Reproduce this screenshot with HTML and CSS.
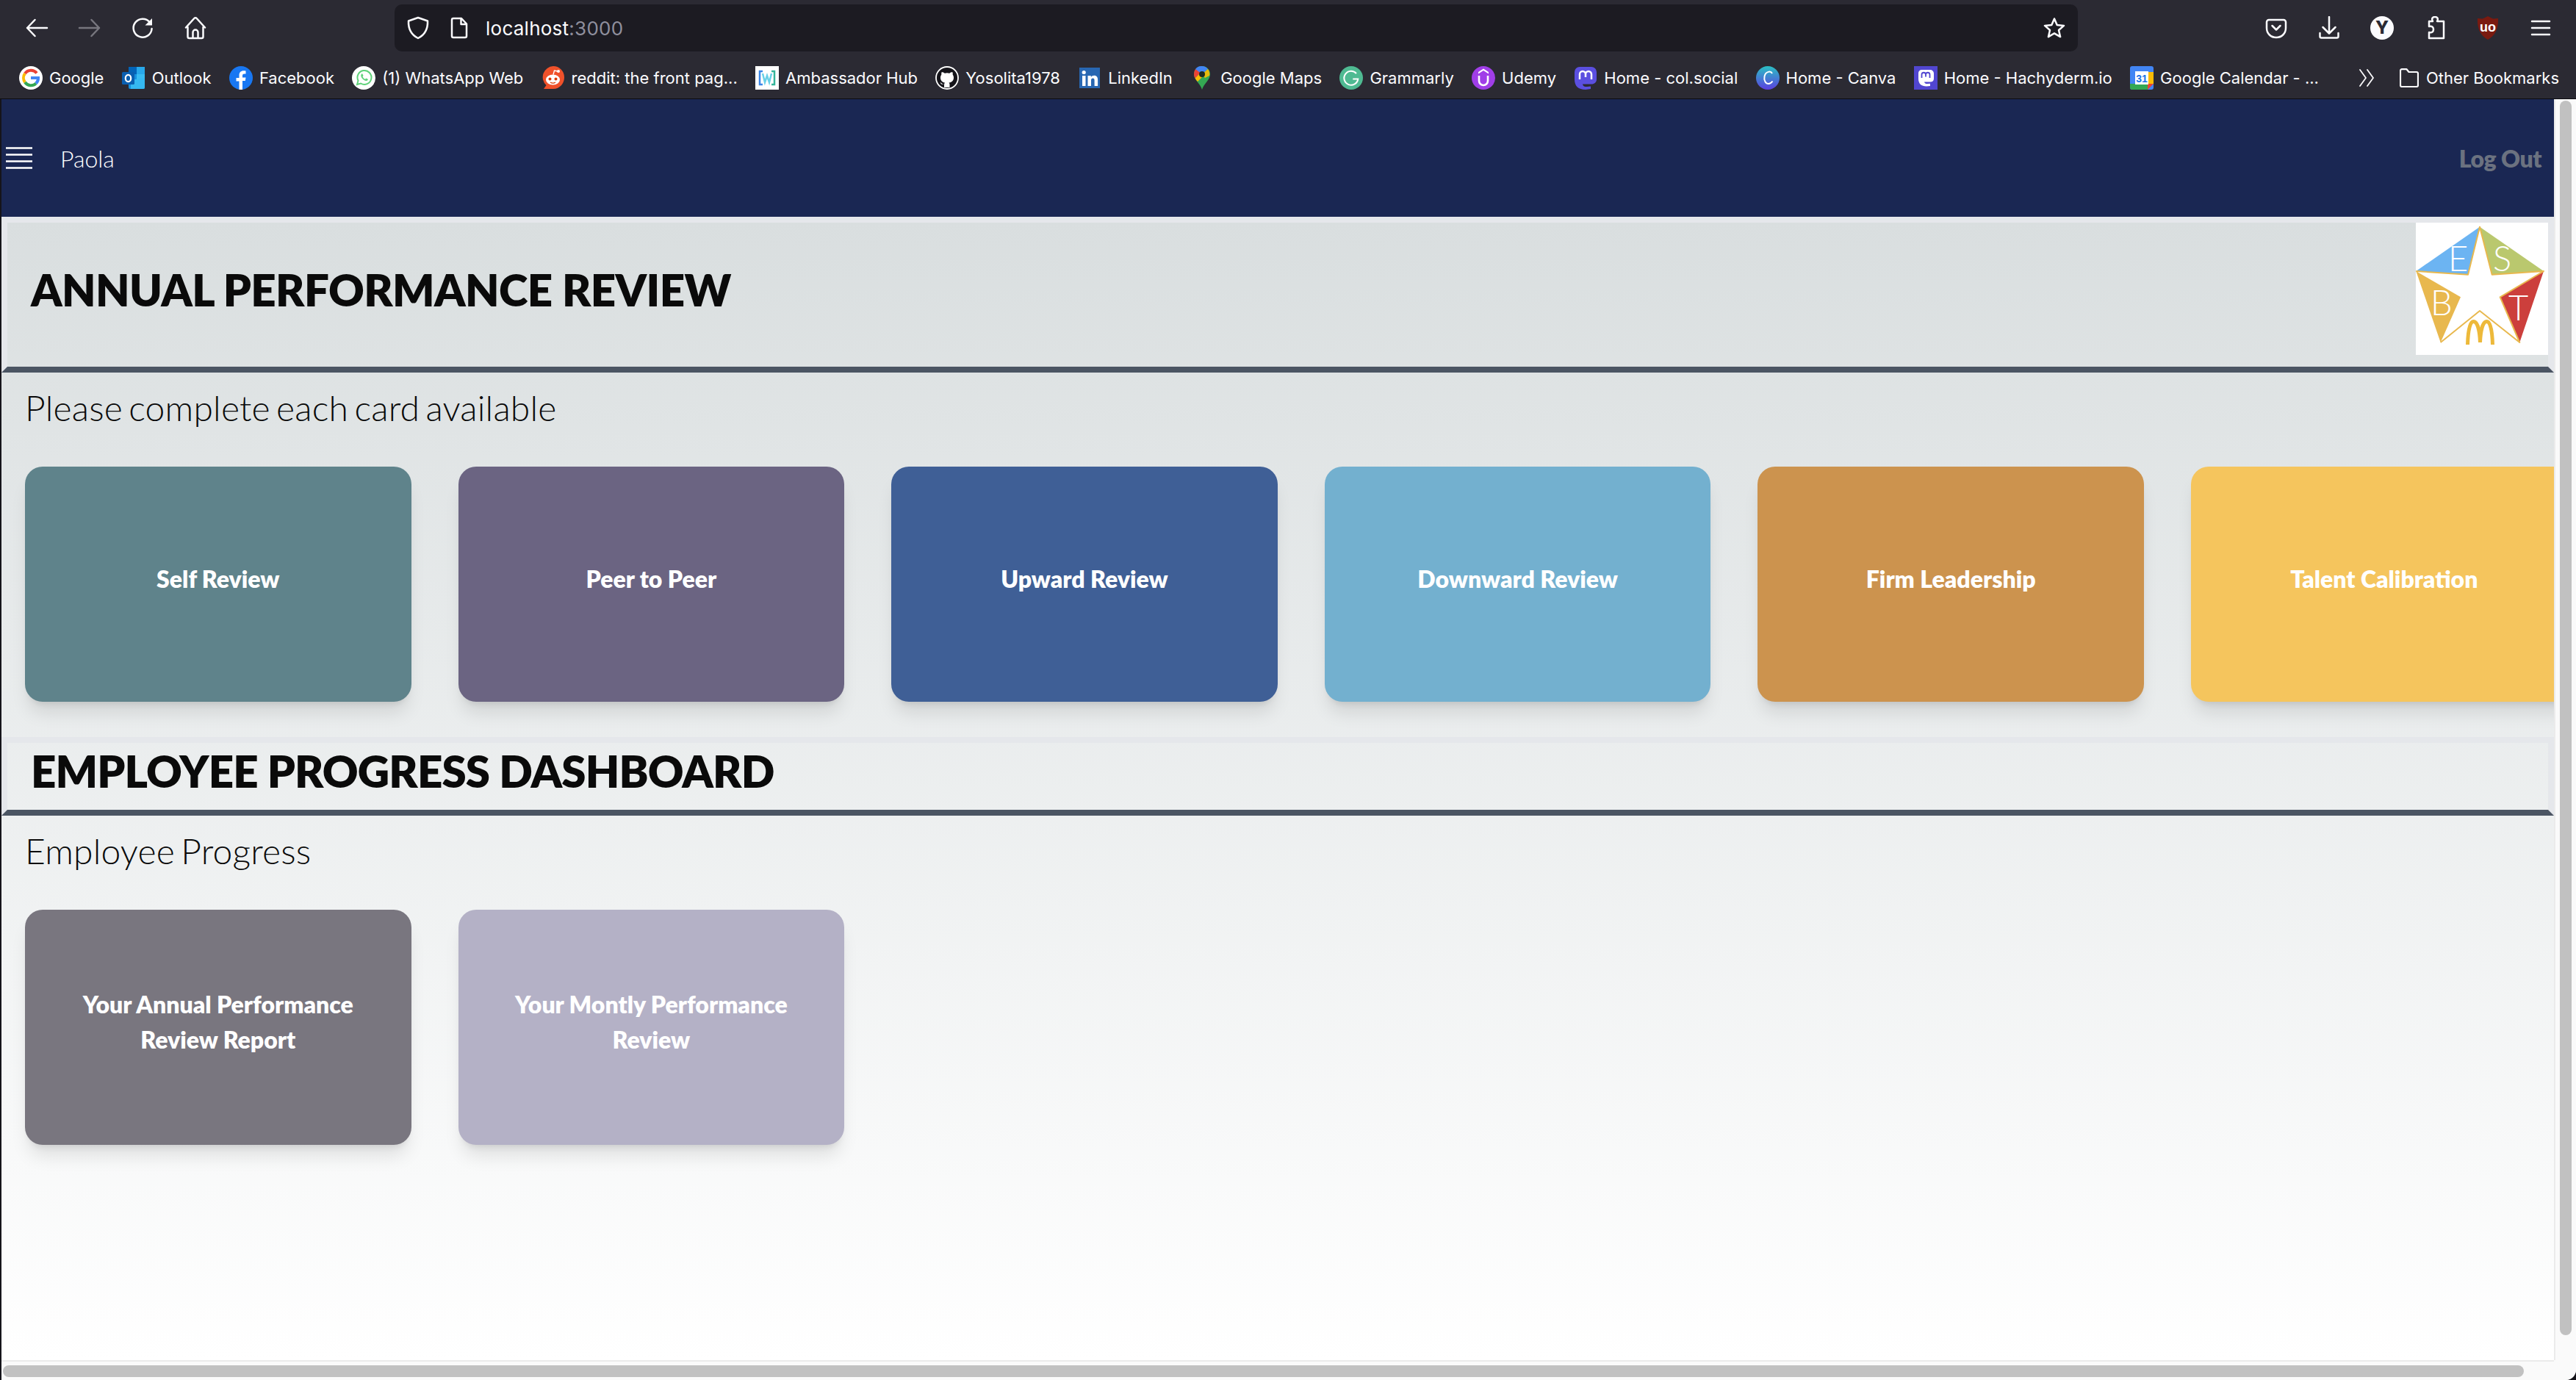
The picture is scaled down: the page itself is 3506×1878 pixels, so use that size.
FILE: index.html
```html
<!DOCTYPE html>
<html lang="en">
<head>
<meta charset="utf-8">
<title>Annual Performance Review</title>
<link rel="stylesheet" href="styles.css">
</head>
<body>
<div class="chrome">
  <div class="toolbar">
    <svg class="tool" viewBox="0 0 32 32"><path d="M30 16H3M13.5 5 3 16l10.5 11"/></svg>
    <svg class="tool dim" viewBox="0 0 32 32"><path d="M2 16h27M18.5 5 29 16 18.5 27"/></svg>
    <svg class="tool" viewBox="0 0 32 32"><path d="M26 8.500A12.500 12.500 0 1 0 28.600 17"/><path class="solid" d="M29 3v9.500h-9.500z"/></svg>
    <svg class="tool" viewBox="0 0 32 32"><path d="M5.500 15v13a2 2 0 0 0 2 2h17a2 2 0 0 0 2-2V15M3 15.500 14.300 3a2.300 2.300 0 0 1 3.400 0L29 15.500M12.500 30v-8a3.500 3.500 0 0 1 7 0v8"/></svg>
    <div class="urlbar">
      <svg class="tool" viewBox="0 0 32 32"><path d="M16 2 29 6.500C29.500 18 25 25.500 16 30 7 25.500 2.500 18 3 6.500Z"/></svg>
      <svg class="tool page" viewBox="0 0 32 32"><path d="M8 3h11l7 7.500V27a2 2 0 0 1-2 2H8a2 2 0 0 1-2-2V5a2 2 0 0 1 2-2ZM18.500 3v8H26"/></svg>
      <span class="url">localhost<span class="port">:3000</span></span>
      <svg class="tool star" viewBox="0 0 32 32"><path d="M16 3.500l3.700 8.500 9.300.9-7 6.100 2.100 9.100-8.100-4.800-8.100 4.800 2.100-9.100-7-6.100 9.300-.9Z"/></svg>
    </div>
    <div class="tools-right">
      <svg class="tool" viewBox="0 0 32 32"><path d="M6 5h20a3 3 0 0 1 3 3v8c0 8-6 13-13 13S3 24 3 16V8a3 3 0 0 1 3-3ZM10.500 13l5.500 5.500 5.500-5.500"/></svg>
      <svg class="tool" viewBox="0 0 32 32"><path d="M16 1v22M7.500 15l8.500 8.500 8.500-8.500M3.500 23v4.500a2 2 0 0 0 2 2h21a2 2 0 0 0 2-2V23"/></svg>
      <svg class="tool" viewBox="0 0 32 32"><circle class="solid" cx="16" cy="16" r="16"/><text class="y-letter" x="16" y="24">Y</text></svg>
      <svg class="tool" viewBox="0 0 32 32"><path d="M8 7h5c-2-4 0-6 3-6s5 2 3 6h9v23H8v-8c4 1 6-1 6-4s-2-5-6-4Z"/></svg>
      <svg class="tool" viewBox="0 0 32 32"><path class="ublock" d="M16 0 23 3.500 30 3C30.500 16 27 26 16 32 5 26 1.500 16 2 3L9 3.500Z"/><text class="ub-letter" x="16" y="21">uo</text></svg>
      <svg class="tool" viewBox="0 0 32 32"><path d="M4 7h24M4 16h24M4 25h24"/></svg>
    </div>
  </div>
  <div class="bookmarks">
    <a class="bm"><svg viewBox="0 0 32 32"><circle cx="16" cy="16" r="16" fill="#fff"/><path d="M24 9.500A10 10 0 0 0 8 10" fill="none" stroke="#ea4335" stroke-width="4"/><path d="M8 10a10 10 0 0 0 0 12" fill="none" stroke="#fbbc05" stroke-width="4"/><path d="M8 22a10 10 0 0 0 15 1.500" fill="none" stroke="#34a853" stroke-width="4"/><path d="M16 16h10a10 10 0 0 1-3 7.500" fill="none" stroke="#4285f4" stroke-width="4"/></svg><span>Google</span></a>
    <a class="bm"><svg viewBox="0 0 32 32"><rect x="9" y="1" width="22" height="30" rx="2" fill="#1490df"/><path d="M9 1h11v10H9z" fill="#0364b8"/><path d="M20 1h11v10H20z" fill="#28a8ea"/><path d="M20 11h11v10H20z" fill="#50d9ff" opacity=".6"/><path d="M12 19 31 16v13a2 2 0 0 1-2 2H12z" fill="#35b8f1"/><rect x="0" y="8" width="17" height="17" rx="1.500" fill="#0a5fb0"/><ellipse cx="8.500" cy="16.500" rx="3.700" ry="4.700" fill="none" stroke="#fff" stroke-width="2.200"/></svg><span>Outlook</span></a>
    <a class="bm"><svg viewBox="0 0 32 32"><circle cx="16" cy="16" r="16" fill="#1877f2"/><path d="M13.500 32V20.500h-4V16h4v-3.500c0-4 2.400-6.200 6-6.200 1.700 0 3 .2 3 .2v4h-2c-2 0-2.500 1.200-2.500 2.500v2.500h4.500l-.7 4.500H18V32z" fill="#fff"/></svg><span>Facebook</span></a>
    <a class="bm"><svg viewBox="0 0 32 32"><circle cx="16" cy="16" r="16" fill="#fff"/><path d="M7 25l1.500-5.300A9.500 9.500 0 1 1 12 23.500Z" fill="none" stroke="#5fd27a" stroke-width="2"/><path d="M12.500 11.500c-1.500 3 3.500 9 7.500 8.500 1.500-.3 2-1.500 1.800-2.200l-2.600-1.300-1.100 1.300c-1.500-.6-3-2.100-3.600-3.600l1-1.100-1.200-2.700c-.7-.2-1.400.1-1.800 1.100Z" fill="#5fd27a"/></svg><span>(1) WhatsApp Web</span></a>
    <a class="bm"><svg viewBox="0 0 32 32"><path d="M16 0a15 15 0 0 1 15 15c0 9-6.500 16-15 16H3l3.500-5A15 15 0 0 1 16 0Z" fill="#f0512a"/><ellipse cx="15.500" cy="18.500" rx="9.500" ry="7" fill="#fff"/><circle cx="11.500" cy="17.500" r="2" fill="#d93a00"/><circle cx="19.500" cy="17.500" r="2" fill="#d93a00"/><path d="M12 22c2 1.300 5 1.300 7 0" stroke="#d93a00" stroke-width="1.200" fill="none"/><path d="M16 11.500 17.500 6 22 7" stroke="#fff" stroke-width="1.400" fill="none"/><circle cx="23" cy="7" r="2" fill="#fff"/></svg><span>reddit: the front pag...</span></a>
    <a class="bm"><svg viewBox="0 0 32 32"><rect width="32" height="32" fill="#fff"/><path d="M10 7H6v18h4" fill="none" stroke="#3b86e8" stroke-width="2.500"/><path d="M22 7h4v18h-4" fill="none" stroke="#35b59a" stroke-width="2.500"/><path d="M10 10l3 12 3-9 3 9 3-12" fill="none" stroke="#69d0e8" stroke-width="2.500"/></svg><span>Ambassador Hub</span></a>
    <a class="bm"><svg viewBox="0 0 32 32"><circle cx="16" cy="16" r="15" fill="#15141a" stroke="#fff" stroke-width="1.800"/><path d="M12 29v-4c-3.500.5-4.500-1-5.500-3 1.500.3 2.500 1.500 3.500 2.500 1 .5 2 .4 2.300 0 0-1 .2-1.500.7-2C9 22 7 19.500 7 15.500c0-1.500.5-2.700 1.300-3.700-.2-1.200-.1-2.500.4-3.800 1.500 0 3 .9 4 1.700a12 12 0 0 1 6.600 0c1-.8 2.500-1.700 4-1.700.5 1.300.6 2.600.4 3.800.8 1 1.300 2.200 1.300 3.700 0 4-2 6.500-6.500 7 .7.600 1 1.500 1 2.500v4Z" fill="#fff"/></svg><span>Yosolita1978</span></a>
    <a class="bm"><svg viewBox="0 0 32 32"><rect x="2" y="2" width="28" height="28" fill="#2867b2"/><rect x="6" y="13" width="4.500" height="14" fill="#fff"/><circle cx="8.200" cy="8.500" r="2.600" fill="#fff"/><path d="M13.500 13h4.300v2c1-1.500 2.500-2.300 4.300-2.300 3.700 0 5 2.400 5 6V27h-4.500v-7.500c0-2-.6-3-2.200-3s-2.400 1.200-2.400 3V27h-4.500z" fill="#fff"/></svg><span>LinkedIn</span></a>
    <a class="bm"><svg viewBox="0 0 32 32"><path d="M16 32C14 24 5 19 5 11a11 11 0 0 1 22 0c0 8-9 13-11 21Z" fill="#34a853"/><path d="M7 4a11 11 0 0 0-2 7c0 2 .6 4 1.600 5.600L16 7z" fill="#ea4335"/><path d="M16 0a11 11 0 0 0-9 4l9 7 8-7a11 11 0 0 0-8-4Z" fill="#4285f4"/><path d="M24 4 16 11l4 5 6-3a11 11 0 0 0-2-9Z" fill="#fbbc05" opacity=".9"/><path d="M6.600 16.600 16 7v8l-6 6a20 20 0 0 1-3.400-4.400Z" fill="#fbbc05"/><circle cx="16" cy="11" r="4" fill="#1f2a1f"/></svg><span>Google Maps</span></a>
    <a class="bm"><svg viewBox="0 0 32 32"><circle cx="16" cy="16" r="16" fill="#4fba92"/><path d="M23 10a9.500 9.500 0 1 0 2.300 7.500h-7" fill="none" stroke="#fff" stroke-width="2"/></svg><span>Grammarly</span></a>
    <a class="bm"><svg viewBox="0 0 32 32"><circle cx="16" cy="16" r="16" fill="#a03ee8"/><path d="M10 13v7a6 6 0 0 0 12 0v-7" fill="none" stroke="#fff" stroke-width="2.600"/><path d="M16 3.500 23 8v2.500l-7-4.500-7 4.500V8Z" fill="#fff"/></svg><span>Udemy</span></a>
    <a class="bm"><svg viewBox="0 0 32 32"><path d="M8 1h16a7 7 0 0 1 7 7v10c0 4-3 6.500-7 6.500H12c.5 3 3 3.500 6 3.500l5-.5v3.500L16 32C6 32 1 27 1 18V8a7 7 0 0 1 7-7Z" fill="#5b4fe0"/><path d="M8 18v-7a3.500 3.500 0 0 1 8 0v4m0 0v-4a3.500 3.500 0 0 1 8 0v7" fill="none" stroke="#fff" stroke-width="2.500"/></svg><span>Home - col.social</span></a>
    <a class="bm"><svg viewBox="0 0 32 32"><defs><linearGradient id="cv" x1="0" y1="0" x2="0" y2="1"><stop offset="0" stop-color="#2bc0c4"/><stop offset="1" stop-color="#5b3fe0"/></linearGradient></defs><circle cx="16" cy="16" r="16" fill="url(#cv)"/><path d="M22 10c-2-4-9-3-10.500 4-1.200 6 2 10 5.500 10 2 0 4-1.500 5.500-3.500" fill="none" stroke="#fff" stroke-width="2"/></svg><span>Home - Canva</span></a>
    <a class="bm"><svg viewBox="0 0 32 32"><rect width="32" height="32" fill="#5146d0"/><path d="M10 5h12a5 5 0 0 1 5 5v7c0 3-2 4.500-5 4.500h-8c.5 2 2 2.500 4 2.500l4-.3V27l-5 .5C10 27.500 6 24 6 17v-7a5 5 0 0 1 4-5Z" fill="#fff"/><path d="M10.500 16v-4.500a2.700 2.700 0 0 1 5.500 0v3m0 0v-3a2.700 2.700 0 0 1 5.500 0V16" fill="none" stroke="#5146d0" stroke-width="1.800"/></svg><span>Home - Hachyderm.io</span></a>
    <a class="bm"><svg viewBox="0 0 32 32"><rect width="32" height="32" rx="3" fill="#4285f4"/><path d="M0 24h24v8H3a3 3 0 0 1-3-3Z" fill="#34a853"/><path d="M24 24h8l-8 8Z" fill="#ea4335"/><path d="M24 8h8v16h-8Z" fill="#fbbc05"/><rect x="7" y="7" width="18" height="18" fill="#fff"/><text class="cal" x="16" y="22">31</text></svg><span>Google Calendar - ...</span></a>
    <svg class="tool more" viewBox="0 0 24 24"><path d="M3 1l8 11-8 11M13 1l8 11-8 11"/></svg>
    <a class="bm folder"><svg class="tool" viewBox="0 0 26 26"><path d="M3 1.200h6.500l3 3.800H23a2 2 0 0 1 2 2v16a2 2 0 0 1-2 2H3a2 2 0 0 1-2-2V3.200a2 2 0 0 1 2-2Z"/></svg><span>Other Bookmarks</span></a>
  </div>
</div>

<div class="viewport">
  <div class="app">
    <nav class="nav">
      <svg class="burger" viewBox="0 0 36 32"><path d="M0 2.500h36M0 11.500h36M0 20.500h36M0 29.500h36"/></svg>
      <span class="user">Paola</span>
      <a class="logout">Log Out</a>
    </nav>
    <main class="content">
      <header class="section-head">
        <h1>ANNUAL PERFORMANCE REVIEW</h1>
        <svg class="logo" viewBox="0 0 180 180">
          <rect width="180" height="180" fill="#fff"/>
          <path d="M87 5.700 .3 66 71 70.700Z" fill="#6cb4f2"/>
          <path d="M87 5.700 174 66 103.700 70.700Z" fill="#bac86e"/>
          <path d="M.3 66 33.700 163 61 101.300Z" fill="#e8b84e"/>
          <path d="M174 66 141.300 163 114.700 101.300Z" fill="#cc3f3c"/>
          <path class="logo-line" d="M.3 66 71 70.700 87 5.700 103.700 70.700 174 66 114.700 101.300 141.300 163 87 120 33.700 163"/>
          <text class="logo-letter" x="44" y="66">E</text>
          <text class="logo-letter" x="105" y="66">S</text>
          <text class="logo-letter" x="20" y="126">B</text>
          <text class="logo-letter" x="126" y="133">T</text>
          <path class="logo-arches" d="M70.500 166C71 146 74 134.500 78.500 134.500 84 134.500 87 148 87.500 163 88 148 91 134.500 96.500 134.500 101 134.500 104 146 104.500 166"/>
        </svg>
      </header>
      <p class="subtitle">Please complete each card available</p>
      <div class="cards">
        <a class="card teal">Self Review</a>
        <a class="card plum">Peer to Peer</a>
        <a class="card navy">Upward Review</a>
        <a class="card sky">Downward Review</a>
        <a class="card ochre">Firm Leadership</a>
        <a class="card amber">Talent Calibration</a>
      </div>
      <header class="section-head">
        <h1 class="tight">EMPLOYEE PROGRESS DASHBOARD</h1>
      </header>
      <p class="subtitle">Employee Progress</p>
      <div class="cards">
        <a class="card slate">Your Annual Performance Review Report</a>
        <a class="card lilac">Your Montly Performance Review</a>
      </div>
    </main>
  </div>
  <div class="vtrack"><div class="vthumb"></div></div>
  <div class="htrack"><div class="hthumb"></div></div>
  <div class="corner"></div>
</div>
</body>
</html>
```

FILE: styles.css
```css
* { box-sizing: border-box; }
html, body { margin: 0; padding: 0; }
body {
  width: 3506px;
  height: 1878px;
  overflow: hidden;
  background: #15141a;
  display: flex;
  flex-direction: column;
  font-family: "Lato", "Noto Sans", sans-serif;
}

/* Browser chrome */
.chrome {
  flex: 0 0 135px;
  background: #2b2a33;
  border-bottom: 1px solid #0c0c10;
  display: flex;
  flex-direction: column;
}
.toolbar {
  height: 70px;
  padding: 6px 0 0 34px;
  display: flex;
  align-items: stretch;
}
.toolbar > .tool { margin: 16px 40px 0 0; }
.tool {
  width: 32px;
  height: 32px;
  flex: none;
  fill: none;
  stroke: #fbfbfe;
  stroke-width: 2.5;
  stroke-linecap: round;
  stroke-linejoin: round;
}
.tool.dim { stroke: #77767e; }
.tool .solid { fill: #fbfbfe; stroke: none; }
.urlbar {
  width: 2291px;
  margin-left: 215px;
  height: 64px;
  background: #1c1b22;
  border-radius: 10px;
  display: flex;
  align-items: center;
  padding: 0 16px;
  color: #fbfbfe;
}
.tool.page { margin-left: 24px; }
.url {
  margin-left: 20px;
  font-family: "Inter", "Liberation Sans", sans-serif;
  font-size: 26px;
  letter-spacing: 0.25px;
  flex: 1;
}
.port { color: #8f8f9d; }
.tools-right {
  display: flex;
  align-items: center;
  gap: 40px;
  margin-left: 254px;
  height: 64px;
}
.y-letter {
  font: 800 24px "Inter", sans-serif;
  text-anchor: middle;
  fill: #2b2a33;
  stroke: none;
}
.ublock { fill: #7a1a10; stroke: none; }
.ub-letter {
  font: 700 18px "Liberation Sans", sans-serif;
  text-anchor: middle;
  fill: #fff;
  stroke: none;
}

.bookmarks {
  flex: 1;
  display: flex;
  align-items: center;
  gap: 24.3px;
  padding: 8px 23px 0 26px;
}
.bm {
  display: flex;
  align-items: center;
  gap: 9px;
  color: #fbfbfe;
  font-family: "Inter", "Liberation Sans", sans-serif;
  font-size: 22px;
  white-space: nowrap;
}
.bm > svg { width: 32px; height: 32px; flex: none; }
.bm.folder { gap: 10px; }
.bm.folder > svg { width: 26px; height: 26px; stroke-width: 2.2; }
.cal {
  font: 700 14px "Liberation Sans", sans-serif;
  text-anchor: middle;
  fill: #1a73e8;
}
.tool.more {
  width: 24px;
  height: 24px;
  stroke-width: 1.8;
  margin-left: auto;
  margin-right: 9px;
}

/* Page viewport */
.viewport {
  flex: 1;
  min-height: 0;
  margin-left: 2px;
  display: grid;
  grid-template-columns: 1fr 30px;
  grid-template-rows: 1fr 27px;
  background: #fafafa;
  border-bottom-right-radius: 14px;
  overflow: hidden;
}
.app {
  min-width: 0;
  min-height: 0;
  overflow: hidden;
  display: flex;
  flex-direction: column;
}
.nav {
  flex: 0 0 160px;
  background: #1a2753;
  display: flex;
  align-items: center;
  padding: 0 17px 0 6px;
}
.burger {
  width: 36px;
  height: 32px;
  fill: none;
  stroke: #fff;
  stroke-width: 2.6;
}
.user {
  margin-left: 38px;
  color: #fff;
  font-size: 32px;
  font-weight: 300;
}
.logout {
  margin-left: auto;
  color: #6b7280;
  font-size: 32px;
  font-weight: 800;
  letter-spacing: -0.5px;
}

.content {
  flex: 1;
  min-height: 0;
  background: linear-gradient(to bottom, #d9dedf, #ffffff);
}
.section-head {
  border: 8px solid #e5e7eb;
  border-bottom-color: #4b5563;
  padding: 0 0 16px 32px;
  display: flex;
  align-items: center;
  justify-content: space-between;
}
.section-head h1 {
  margin: 0;
  padding-top: 2px;
  font-size: 60px;
  line-height: 73px;
  font-weight: 800;
  letter-spacing: -0.6px;
  color: #0a0a0a;
}
.section-head h1.tight { letter-spacing: -0.86px; }
.logo { width: 180px; height: 180px; flex: none; display: block; }
.logo-line {
  fill: none;
  stroke: #e8b84e;
  stroke-width: 2;
  stroke-linejoin: round;
}
.logo-arches {
  fill: none;
  stroke: #edb93a;
  stroke-width: 5;
}
.logo-letter {
  font-family: "Lato", sans-serif;
  font-weight: 300;
  font-size: 47px;
  fill: #fff;
}
.subtitle {
  margin: 24px 0 56px 32px;
  font-size: 48px;
  line-height: 48px;
  font-weight: 300;
  letter-spacing: 0.2px;
  word-spacing: -5px;
  color: #0a0a0a;
}
.cards {
  display: flex;
  gap: 64px;
  padding: 0 0 48px 32px;
}
.card {
  flex: 0 0 525.6px;
  height: 320px;
  border-radius: 24px;
  padding: 0 32px 14px;
  display: flex;
  align-items: center;
  justify-content: center;
  text-align: center;
  color: #fff;
  font-size: 32px;
  line-height: 48px;
  font-weight: 800;
  box-shadow: 0 20px 25px -5px rgba(0,0,0,.1), 0 8px 10px -6px rgba(0,0,0,.1);
}
.teal { background: #5f838b; }
.plum { background: #6b6482; }
.navy { background: #3f5f96; }
.sky { background: #73b0cf; }
.ochre { background: #cc934e; }
.amber { background: #f5c55d; }
.slate { background: #79767f; }
.lilac { background: #b4b1c6; }

/* Scrollbars */
.vtrack {
  grid-column: 2;
  grid-row: 1;
  border-left: 2px solid #ebebeb;
  padding: 2px 0 34px 6px;
  background: #fafafa;
}
.vthumb {
  width: 16px;
  height: 100%;
  background: #c1c1c1;
  border-radius: 8px;
}
.htrack {
  grid-column: 1;
  grid-row: 2;
  border-top: 2px solid #ebebeb;
  padding: 5px 41px 3px 0;
  background: #fafafa;
}
.hthumb {
  height: 16px;
  margin-left: 2px;
  background: #c1c1c1;
  border-radius: 8px;
}
.corner {
  grid-column: 2;
  grid-row: 2;
  background: #fafafa;
}
```
